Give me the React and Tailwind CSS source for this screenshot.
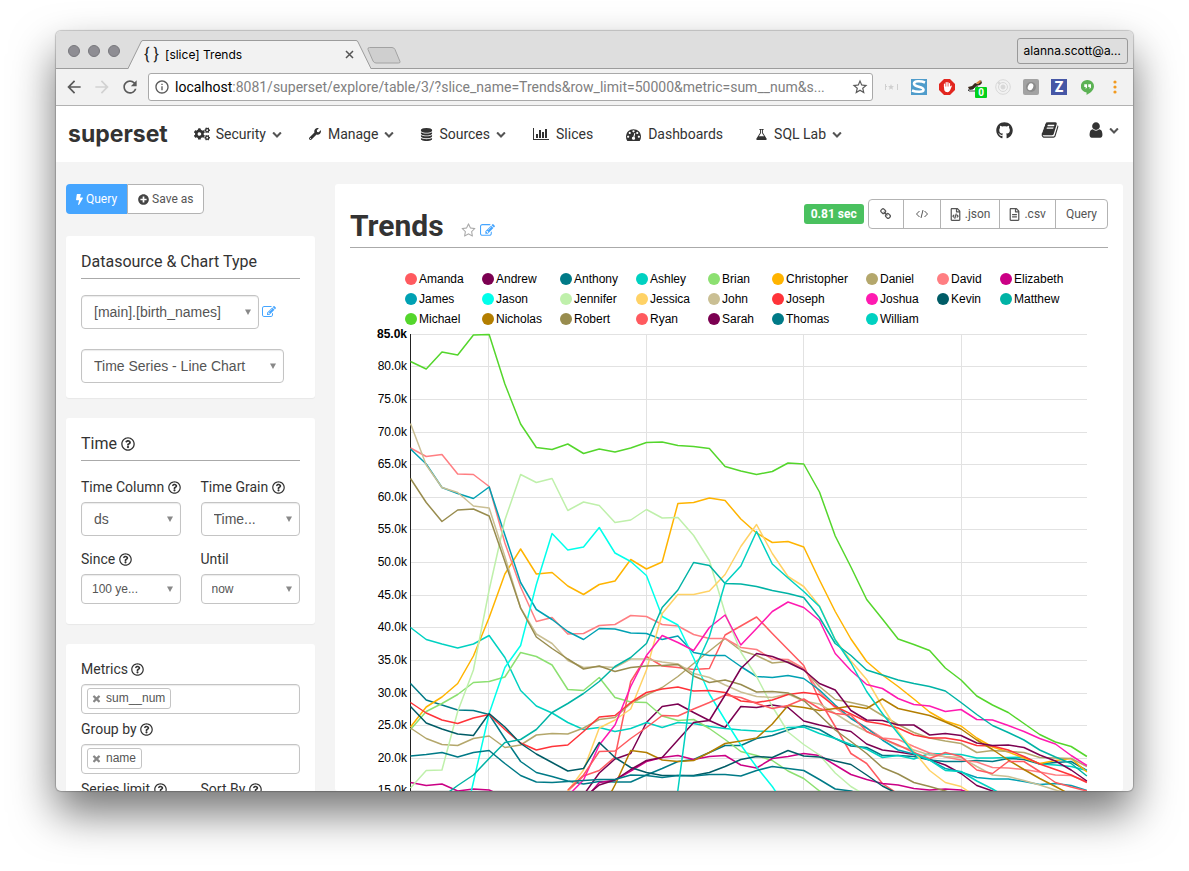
import React, { useState } from "react";
import {
  FaBolt,
  FaCogs,
  FaGithub,
  FaPlusCircle,
  FaRegFileAlt,
  FaRegFileCode,
  FaRegQuestionCircle,
  FaWrench,
} from "react-icons/fa";
import { MdArrowBack, MdArrowForward, MdRefresh, MdStarBorder, MdInfoOutline } from "react-icons/md";

// Older Font Awesome glyphs that the icon package no longer ships
const glyphs = {
  edit: "M888 1184l116-116-152-152-116 116v56h96v96h56zm440-720q-16-16-33 1l-350 350q-17 17-1 33t33-1l350-350q17-17 1-33zm80 594v190q0 119-84.5 203.5t-203.5 84.5h-832q-119 0-203.5-84.5t-84.5-203.5v-832q0-119 84.5-203.5t203.5-84.5h832q63 0 117 25 15 7 18 23 3 17-9 29l-49 49q-14 14-32 8-23-6-45-6h-832q-66 0-113 47t-47 113v832q0 66 47 113t113 47h832q66 0 113-47t47-113v-126q0-13 9-22l64-64q15-15 35-7t20 29zm-96-738l288 288-672 672h-288v-288zm444 132l-92 92-288-288 92-92q28-28 68-28t68 28l152 152q28 28 28 68t-28 68z",
  star: "M1201 1004l306-297-422-62-189-382-189 382-422 62 306 297-73 421 378-199 377 199zm527-357q0 22-26 48l-363 354 86 500q1 7 1 20 0 50-41 50-19 0-40-12l-449-236-449 236q-22 12-40 12-21 0-31.5-14.5t-10.5-35.5q0-6 2-20l86-500-364-354q-25-27-25-48 0-37 56-46l502-73 225-455q19-41 49-41t49 41l225 455 502 73q56 9 56 46z",
  chart: "M640 896v512h-256v-512h256zm384-512v1024h-256v-1024h256zm1024 1152v128h-2048v-1536h128v1408h1920zm-640-896v768h-256v-768h256zm384-384v1152h-256v-1152h256z",
  database: "M896 768q237 0 443-43t325-127v170q0 69-103 128t-280 93.5-385 34.5-385-34.5-280-93.5-103-128v-170q119 84 325 127t443 43zm0 768q237 0 443-43t325-127v170q0 69-103 128t-280 93.5-385 34.5-385-34.5-280-93.5-103-128v-170q119 84 325 127t443 43zm0-384q237 0 443-43t325-127v170q0 69-103 128t-280 93.5-385 34.5-385-34.5-280-93.5-103-128v-170q119 84 325 127t443 43zm0-1152q208 0 385 34.5t280 93.5 103 128v128q0 69-103 128t-280 93.5-385 34.5-385-34.5-280-93.5-103-128v-128q0-69 103-128t280-93.5 385-34.5z",
  chevron: "M1683 808l-742 741q-19 19-45 19t-45-19l-742-741q-19-19-19-45.5t19-45.5l166-165q19-19 45-19t45 19l531 531 531-531q19-19 45-19t45 19l166 165q19 19 19 45.5t-19 45.5z",
  flask: "M1591 1448q56 89 21.5 152.5t-140.5 63.5h-1152q-106 0-140.5-63.5t21.5-152.5l503-793v-399h-64q-26 0-45-19t-19-45 19-45 45-19h512q26 0 45 19t19 45-19 45-45 19h-64v399zm-779-725l-272 429h712l-272-429-20-31v-436h-128v436z",
  dashboard: "M384 1152q0-53-37.5-90.5t-90.5-37.5-90.5 37.5-37.5 90.5 37.5 90.5 90.5 37.5 90.5-37.5 37.5-90.5zm192-448q0-53-37.5-90.5t-90.5-37.5-90.5 37.5-37.5 90.5 37.5 90.5 90.5 37.5 90.5-37.5 37.5-90.5zm428 481l101-382q6-26-7.5-48.5t-38.5-29.5-48 6.5-30 39.5l-101 382q-60 5-107 43.5t-63 98.5q-20 77 20 146t117 89 146-20 89-117q16-60-6-117t-72-91zm660-33q0-53-37.5-90.5t-90.5-37.5-90.5 37.5-37.5 90.5 37.5 90.5 90.5 37.5 90.5-37.5 37.5-90.5zm-640-640q0-53-37.5-90.5t-90.5-37.5-90.5 37.5-37.5 90.5 37.5 90.5 90.5 37.5 90.5-37.5 37.5-90.5zm448 192q0-53-37.5-90.5t-90.5-37.5-90.5 37.5-37.5 90.5 37.5 90.5 90.5 37.5 90.5-37.5 37.5-90.5zm320 448q0 261-141 483-19 29-54 29h-1402q-35 0-54-29-141-221-141-483 0-182 71-348t191-286 286-191 348-71 348 71 286 191 191 286 71 348z",
  user: "M1536 1399q0 109-62.5 187t-150.5 78h-854q-88 0-150.5-78t-62.5-187q0-85 8.5-160.5t31.5-152 58.5-131 94-89 134.5-34.5q131 128 313 128t313-128q76 0 134.5 34.5t94 89 58.5 131 31.5 152 8.5 160.5zm-256-887q0 159-112.5 271.5t-271.5 112.5-271.5-112.5-112.5-271.5 112.5-271.5 271.5-112.5 271.5 112.5 112.5 271.5z",
  book: "M1703 478q40 57 18 129l-275 906q-19 64-76.5 107.5t-122.5 43.5h-923q-77 0-148.5-53.5t-99.5-131.5q-24-67-2-127 0-4 3-27t4-37q1-8-3-21.5t-3-19.5q2-11 8-21t16.5-23.5 16.5-23.5q23-38 45-91.5t30-91.5q3-10 .5-30t-.5-28q3-11 17-28t17-23q21-36 42-92t25-90q1-9-2.5-32t.5-28q4-13 22-30.5t22-22.5q19-26 42.5-84.5t27.5-96.5q1-8-3-25.5t-2-26.5q2-8 9-18t18-23 17-21q8-12 16.5-30.5t15-35 16-36 19.5-32 26.5-23.5 36-11.5 47.5 5.5l-1 3q38-9 51-9h761q74 0 114 56t18 130l-274 906q-36 119-71.5 153.5t-128.5 34.5h-869q-27 0-38 15-11 16-1 43 24 70 144 70h923q29 0 56-15.5t35-41.5l300-987q7-22 5-57 38 15 59 43zm-1064 2q-4 13 2 22.5t20 9.5h608q13 0 25.5-9.5t16.5-22.5l21-64q4-13-2-22.5t-20-9.5h-608q-13 0-25.5 9.5t-16.5 22.5zm-83 256q-4 13 2 22.5t20 9.5h608q13 0 25.5-9.5t16.5-22.5l21-64q4-13-2-22.5t-20-9.5h-608q-13 0-25.5 9.5t-16.5 22.5z",
  times: "M1490 1322q0 40-28 68l-136 136q-28 28-68 28t-68-28l-294-294-294 294q-28 28-68 28t-68-28l-136-136q-28-28-28-68t28-68l294-294-294-294q-28-28-28-68t28-68l136-136q28-28 68-28t68 28l294 294 294-294q28-28 68-28t68 28l136 136q28 28 28 68t-28 68l-294 294 294 294q28 28 28 68z",
  chain: "M1456 1216q0-40-28-68l-208-208q-28-28-68-28-42 0-72 32 3 3 19 18.5t21.5 21.5 15 19 13 25.5 3.5 27.5q0 40-28 68t-68 28q-15 0-27.5-3.5t-25.5-13-19-15-21.5-21.5-18.5-19q-33 31-33 73 0 40 28 68l206 207q27 27 68 27 40 0 68-26l147-146q28-28 28-67zm-703-705q0-40-28-68l-206-207q-28-28-68-28-39 0-68 27l-147 146q-28 28-28 67 0 40 28 68l208 208q27 27 68 27 42 0 72-31-3-3-19-18.5t-21.5-21.5-15-19-13-25.5-3.5-27.5q0-40 28-68t68-28q15 0 27.5 3.5t25.5 13 19 15 21.5 21.5 18.5 19q33-31 33-73zm895 705q0 120-85 203l-147 146q-83 83-203 83-121 0-204-85l-206-207q-83-83-83-203 0-123 88-209l-88-88q-86 88-208 88-120 0-204-84l-208-208q-84-84-84-204t85-203l147-146q83-83 203-83 121 0 204 85l206 207q83 83 83 203 0 123-88 209l88 88q86-88 208-88 120 0 204 84l208 208q84 84 84 204z",
};

const Glyph = ({ name, className = "size-4" }) => (
  <svg
    viewBox={name === "chart" ? "0 0 2048 1792" : "0 0 1792 1792"}
    className={`shrink-0 ${className}`}
    fill="currentColor"
    aria-hidden="true"
  >
    <path d={glyphs[name]} />
  </svg>
);

// name, colour, index of first year, then the line's height at every year
const series = [
  ["Amanda", "#ff5a5f", 10, [791, 776, 770.5, 757, 681.5, 656.5, 666, 667.5, 669.5, 668.5, 635, 626, 617, 633.5, 649.5, 665.5, 700, 726.5, 753.5, 763.5, 783.5, 794]],
  ["Andrew", "#7b0051", 11, [795, 773, 759, 753.5, 722.5, 706.5, 704, 712.5, 720.5, 727.5, 706.5, 707.5, 705, 707.5, 721, 725, 728.5, 731.5, 744, 750, 752, 754.5, 759.5, 765, 773.5, 785.5, 791, 797]],
  ["Anthony", "#007a87", 0, [683.5, 700, 705, 710, 710.5, 714.5, 738.5, 761.5, 772.5, 776.5, 781, 784, 781.5, 782, 782, 775, 768.5, 761.5, 759.5, 752.5, 745.5, 745.5, 738.5, 735.5, 730, 725.5, 729.5, 738.5, 746, 747.5, 755.5, 755.5, 756.5, 760, 761.5, 761.5, 760.5, 761.5, 758.5, 759.5, 764, 762.5, 761.5, 770.5]],
  ["Ashley", "#00d1c1", 0, [627.5, 639.5, 644, 648, 644, 635.5, 657.5, 690.5, 706, 713, 722.5, 729.5, 727.5, 731.5, 728.5, 722.5, 727.5, 722.5, 723.5, 726.5, 728.5, 730, 731, 731.5, 727.5, 727, 733.5, 738.5, 744.5, 749, 757.5, 755.5, 759, 753.5, 754, 754.5, 758, 758, 757.5, 757, 764, 765, 766.5, 770.5]],
  ["Brian", "#8ce071", 0, [729.5, 711.5, 703.5, 694.5, 682.5, 681.5, 677, 652.5, 656.5, 665, 689.5, 690.5, 677.5, 697.5, 702, 702.5, 716, 720.5, 719.5, 728.5, 739.5, 751.5, 755.5, 760.5, 771, 778.5, 791, 800]],
  ["Christopher", "#ffb400", 0, [727, 707, 697, 683.5, 656, 617.5, 574, 549, 574, 572.5, 586, 594.5, 584.5, 581, 559.5, 569, 562, 503.5, 502.5, 498, 500.5, 519, 533, 542.5, 541.5, 547, 580, 611.5, 639, 661.5, 675, 686.5, 699, 712, 721, 726, 738, 747, 752, 758, 763.5, 760.5, 758.5, 772]],
  ["Daniel", "#b4a76c", 0, [728, 738.5, 744.5, 745.5, 738.5, 736, 747.5, 745, 735, 733.5, 734, 728, 719.5, 717.5, 703.5, 695, 687.5, 676.5, 663.5, 651, 638.5, 650.5, 655.5, 663, 661.5, 669.5, 686.5, 699.5, 702.5, 706, 715.5, 724.5, 732.5, 738, 741, 743.5, 752.5, 750.5, 751.5, 752.5, 757.5, 758, 758.5, 766.5]],
  ["David", "#ff7e82", 0, [448, 456.5, 454.5, 474, 474.5, 486.5, 543, 587, 621.5, 617.5, 634, 633.5, 625.5, 624.5, 615.5, 616.5, 624.5, 626, 634.5, 638.5, 638.5, 647.5, 649.5, 659, 659.5, 668.5, 692, 708, 718, 728, 738, 739.5, 746.5, 753, 757, 760, 762, 767.5, 768, 769.5, 772, 775, 775.5, 781.5]],
  ["Elizabeth", "#cb0085", 0, [782.5, 785.5, 784, 791, 789, 790, 797, 800, 802, 803, 803, 801, 782.5, 780, 771, 761.5, 757.5, 755.5, 759.5, 756.5, 755.5, 765, 768, 758.5, 756.5, 753.5, 755.5, 765, 774.5, 779.5, 783.5, 785, 788.5, 790, 789, 790, 795]],
  ["James", "#00a1b3", 0, [449, 464, 487.5, 493.5, 498.5, 487, 535, 582.5, 609.5, 619.5, 631.5, 639.5, 628.5, 629, 633, 633.5, 639.5, 636, 652.5, 655.5, 655.5, 666.5, 676.5, 677.5, 675.5, 678.5, 690, 705, 718.5, 728, 740, 750, 754, 760, 768.5, 772, 777.5, 779, 779, 781.5, 784.5, 783.5, 785.5, 790.5]],
  ["Jason", "#00ffeb", 3, [850, 782, 713.5, 667.5, 645.5, 584.5, 533.5, 550, 547, 527.5, 553, 561.5, 575.5, 616.5, 625, 658, 694, 720, 745, 767, 786.5, 810]],
  ["Jennifer", "#bff0ab", 0, [788, 770.5, 770, 711.5, 670, 590, 520, 474.5, 482.5, 478.5, 510.5, 502, 505.5, 522.5, 520, 509.5, 518, 517.5, 535.5, 560.5, 613, 652, 676.5, 706.5, 732, 744.5, 755, 773, 786.5, 796]],
  ["Jessica", "#ffd266", 10, [791, 770, 728, 720, 709, 670, 613.5, 594.5, 594.5, 591, 574.5, 546.5, 524.5, 553.5, 576.5, 586.5, 606, 639.5, 661, 679.5, 706.5, 731.5, 751.5, 770.5, 782.5, 786.5, 797]],
  ["John", "#cabf94", 0, [423.5, 465, 487.5, 492.5, 506, 508, 556.5, 608, 634, 643.5, 660.5, 667.5, 666.5, 667.5, 659, 659, 662, 664, 673.5, 677.5, 685, 692, 696.5, 697.5, 694, 701, 704, 713.5, 723.5, 731.5, 738.5, 746, 750, 755, 756.5, 757.5, 766.5, 775, 776.5, 780.5, 785, 790, 795]],
  ["Joseph", "#ff3339", 0, [702.5, 713, 720, 723.5, 718, 714.5, 729.5, 743, 750, 746.5, 745, 731.5, 717, 715.5, 702.5, 692.5, 689, 687, 691, 690.5, 692.5, 701, 702.5, 700, 694.5, 692.5, 694.5, 706.5, 714, 721.5, 724, 728, 735, 738, 738, 740.5, 745.5, 746, 750, 756.5, 764, 769.5, 775, 782.5]],
  ["Joshua", "#ff1ab1", 10, [796, 780, 745, 725, 686.5, 655.5, 635.5, 642.5, 650.5, 627.5, 615, 645, 628.5, 611.5, 602, 607.5, 620.5, 653.5, 670.5, 684.5, 688.5, 698.5, 704.5, 706, 711.5, 709.5, 719.5, 720, 725.5, 731.5, 738.5, 744, 755.5, 765.5]],
  ["Kevin", "#005c66", 0, [706.5, 723, 729, 734, 735.5, 713.5, 727, 743.5, 754, 762.5, 771, 768.5, 742.5, 757.5, 767.5, 772.5, 775.5, 775.5, 775.5, 772.5, 766.5, 759.5, 756.5, 757.5, 750.5, 756, 757, 761, 764.5, 775, 786, 794]],
  ["Matthew", "#00b3a5", 2, [797, 785.5, 775, 758.5, 742.5, 739.5, 729.5, 712.5, 703.5, 693.5, 681.5, 666.5, 657.5, 643.5, 607.5, 590, 562.5, 565.5, 583.5, 584, 586.5, 590.5, 593.5, 597.5, 617.5, 643.5, 655.5, 670, 675, 680, 683.5, 686.5, 691, 702.5, 714.5, 725.5, 732.5, 740, 750, 757, 763.5, 776]],
  ["Michael", "#54d62c", 0, [361.5, 369, 352, 355, 335, 334.5, 384, 424, 447.5, 449.5, 444, 453.5, 449, 452, 448, 442.5, 442, 445.5, 446.5, 448.5, 466.5, 471, 474.5, 471.5, 463, 464, 492, 536, 567, 599.5, 619, 639, 644.5, 650.5, 668, 680, 696, 705, 712.5, 723.5, 734.5, 742, 746.5, 756.5]],
  ["Nicholas", "#b37e00", 12, [815, 785, 750.5, 752.5, 760, 761.5, 760.5, 752.5, 743.5, 741, 738, 724, 705.5, 707.5, 710.5, 708.5, 706, 708.5, 699, 708.5, 712, 715.5, 722, 729, 740, 749.5, 760, 769.5, 778.5, 786.5, 795]],
  ["Robert", "#988c4e", 0, [478.5, 502.5, 521.5, 510, 509, 516, 561.5, 608, 637, 648.5, 659, 669, 666, 671.5, 667.5, 666, 665.5, 664.5, 676, 682.5, 680, 684.5, 692, 691.5, 693, 700.5, 715, 730, 741.5, 753.5, 767.5, 774, 782.5, 786.5, 791, 797]],
  ["Ryan", "#ff5a5f", 10, [790, 775, 751.5, 751, 738.5, 727.5, 715.5, 716, 709, 702.5, 695, 697.5, 703.5, 708.5, 705.5, 699, 708.5, 713.5, 715, 731.5, 738.5, 745, 752.5, 758.5, 752.5, 756.5, 770, 773.5, 761.5, 761.5, 771.5, 782.5, 787, 791]],
  ["Sarah", "#7b0051", 11, [798, 785, 780, 769.5, 760.5, 757.5, 740, 722.5, 720.5, 695, 668.5, 653.5, 656.5, 662.5, 670, 683.5, 690, 710.5, 720, 720.5, 725, 725, 735, 733.5, 735.5, 743, 745.5, 745, 747.5, 755, 761, 770, 781]],
  ["Thomas", "#007a87", 0, [756, 754.5, 752.5, 757, 752.5, 750.5, 763.5, 775.5, 782, 782.5, 781.5, 780.5, 779.5, 779.5, 775, 775.5, 777.5, 775.5, 776, 774.5, 774.5, 776, 770.5, 766.5, 768.5, 770.5, 779.5, 789, 791, 796]],
  ["William", "#00d1c1", 16, [900, 790, 671.5, 636.5, 583, 566, 531.5, 564, 578, 591.5, 606.5, 640, 663, 691.5, 713.5, 733.5, 753.5, 760, 770.5, 771.5, 781, 789, 798]],
];

const yearX = (i) => 410.5 + i * 15.73;
const gridX = (i) => Math.floor(410 + i * 15.75) + 0.5;
const ticks = [80, 75, 70, 65, 60, 55, 50, 45, 40, 35, 30, 25, 20, 15, 10];
const tickY = (v) => Math.floor(366.8 + (80 - v) * 6.526);

const LineChart = () => (
  <svg
    viewBox="350 329 758 520"
    className="block h-auto w-full overflow-visible"
    role="img"
    aria-label="Trends line chart"
  >
    <g stroke="#e2e2e2" strokeWidth="1">
      <path d="M410 334.5H1087" />
      {ticks.map((t) => (
        <path key={t} d={`M410 ${tickY(t) + 0.5}H1087`} />
      ))}
      {[5, 15, 25, 35].map((i) => (
        <path key={i} d={`M${gridX(i)} 334V849`} />
      ))}
    </g>
    <path d="M410.5 334V849" stroke="#222" strokeWidth="1" />
    <g fill="none" strokeWidth="1.5" strokeLinejoin="round">
      {series.map(([name, color, start, ys]) => (
        <polyline
          key={name}
          stroke={color}
          points={ys.map((y, k) => `${yearX(start + k)},${y}`).join(" ")}
        />
      ))}
    </g>
    <g fontSize="12" textAnchor="end" fill="#000" fontFamily="'Liberation Sans', Arial, sans-serif">
      <text x="407" y="338" fontWeight="bold">
        85.0k
      </text>
      {ticks.map((t) => (
        <text key={t} x="407" y={tickY(t) + 4}>
          {t}.0k
        </text>
      ))}
    </g>
  </svg>
);

const Legend = () => (
  <ul className="ml-[55px] mt-[21px] grid grid-cols-[77px_78px_76px_72px_64px_94px_71px_63px_auto] font-['Liberation_Sans',Arial,sans-serif] text-xs leading-5 text-black">
    {series.map(([name, color]) => (
      <li key={name} className="flex items-center gap-[2px] whitespace-nowrap">
        <span className="size-3 shrink-0 rounded-full" style={{ backgroundColor: color }} />
        {name}
      </li>
    ))}
  </ul>
);

const Help = () => <FaRegQuestionCircle className="inline size-[13px] align-[-2px]" />;

const Select = ({ id, label, value, small, className = "" }) => (
  <div className={`relative ${className}`}>
    <select
      id={id}
      aria-label={label}
      className={`block w-full appearance-none rounded border border-[#c4c4c4] bg-white pr-6 font-['Liberation_Sans',Arial,sans-serif] text-[#555] shadow-[inset_0_1px_1px_rgba(0,0,0,0.08)] ${
        small ? "h-[30px] pl-[10px] text-xs" : "h-[34px] pl-3 text-sm"
      }`}
    >
      <option>{value}</option>
    </select>
    <svg viewBox="0 0 6 6" className="pointer-events-none absolute right-2 top-1/2 size-[6px] -translate-y-1/2">
      <path d="M0 .5h6L3 6z" fill="#888" />
    </svg>
  </div>
);

const Field = ({ id, label, value, small, help = true }) => (
  <div>
    <label htmlFor={id} className="mb-[5px] block whitespace-nowrap text-sm leading-5">
      {label} {help && <Help />}
    </label>
    <Select id={id} value={value} small={small} />
  </div>
);

const TagField = ({ id, label, initial }) => {
  const [tags, setTags] = useState([initial]);
  return (
    <div>
      <label htmlFor={id} className="mb-[5px] block text-sm leading-5">
        {label} <Help />
      </label>
      <div className="flex h-[30px] items-start rounded border border-[#c4c4c4] bg-white px-[5px] pt-[3px] shadow-[inset_0_1px_1px_rgba(0,0,0,0.08)]">
        {tags.map((tag) => (
          <span
            key={tag}
            className="flex h-[21px] items-center gap-1 rounded-[3px] border border-[#c4c4c4] pb-px pl-[3px] pr-[5px] font-['Liberation_Sans',Arial,sans-serif] text-xs text-[#555]"
          >
            <button type="button" aria-label={`Remove ${tag}`} onClick={() => setTags([])}>
              <Glyph name="times" className="size-[11px] text-[#888]" />
            </button>
            {tag}
          </span>
        ))}
        <input id={id} className="min-w-0 flex-1 bg-transparent text-xs outline-none" />
      </div>
    </div>
  );
};

const Card = ({ title, children, className = "" }) => (
  <section className={`rounded-[3px] bg-white px-[15px] pt-[15px] shadow-[0_1px_1px_rgba(0,0,0,0.05)] ${className}`}>
    {title && (
      <h2 className="mb-4 border-b border-[#aaa] pb-[6px] pt-px text-base leading-5">{title}</h2>
    )}
    {children}
  </section>
);

const NavItem = ({ icon, label, caret }) => (
  <a href="#" className={`flex items-center gap-[6px] whitespace-nowrap ${caret ? "" : "pr-[6px]"}`}>
    {icon}
    <span>{label}</span>
    {caret && <Glyph name="chevron" className="size-[10px] text-[#555]" />}
  </a>
);

const ToolIcon = ({ children }) => (
  <span className="flex w-7 shrink-0 items-center justify-center">{children}</span>
);

const TabStrip = () => (
  <div className="flex h-[38px] items-end border-b border-[#9c9c9c] bg-[#dedede] pl-3 pt-[2px]">
    <div className="flex gap-2 self-center">
      <span className="size-3 rounded-full border border-[#77777c] bg-[#8e8d93]" />
      <span className="size-3 rounded-full border border-[#77777c] bg-[#8e8d93]" />
      <span className="size-3 rounded-full border border-[#77777c] bg-[#8e8d93]" />
    </div>
    <div className="relative -mb-px ml-2 flex h-[29px] w-[243px] items-center pl-4 pr-[17px] font-['Inter',sans-serif] text-xs text-black">
      <svg viewBox="0 0 243 29" className="absolute inset-0 size-full">
        <path d="M0 29L13 2Q13.500 .5 15 .5H228Q229.500 .5 230 2L243 29z" fill="#f2f2f2" />
        <path
          d="M0 28.500L13 2Q13.500 .5 15 .5H228Q229.500 .5 230 2L243 28.500"
          fill="none"
          stroke="#9c9c9c"
        />
      </svg>
      <span className="relative w-4 whitespace-nowrap font-['Roboto',sans-serif] text-base leading-5 text-[#222]">
        {"{ }"}
      </span>
      <span className="relative ml-[5px] flex-1">[slice] Trends</span>
      <button type="button" aria-label="Close tab" className="relative">
        <svg viewBox="0 0 9 9" className="size-[9px]" stroke="#555" strokeWidth="1.5">
          <path d="M1 1l7 7M8 1L1 8" />
        </svg>
      </button>
    </div>
    <svg viewBox="0 0 34 17" className="-ml-1 mb-1 h-[17px] w-[34px]">
      <path d="M2.500 .5H25q2 0 3 2l5 12q.5 1.500-1.500 1.500H9q-2 0-3-2L1 2.500q-.5-2 1.500-2z" fill="#cfcfcf" stroke="#a2a2a2" />
    </svg>
    <button
      type="button"
      className="ml-auto mr-[5px] h-[26px] self-center rounded-[3px] border border-[#999] px-[6px] font-['Inter',sans-serif] text-xs text-black"
    >
      alanna.scott@a…
    </button>
  </div>
);

const Toolbar = () => (
  <div className="flex h-[37px] items-center border-b border-[#b2b2b2] bg-[#f2f2f2] px-1">
    <button type="button" aria-label="Back" className="flex w-7 justify-center text-[#5a5a5a]">
      <MdArrowBack className="size-5" />
    </button>
    <button type="button" aria-label="Forward" className="flex w-7 justify-center text-[#d2d2d2]">
      <MdArrowForward className="size-5" />
    </button>
    <button type="button" aria-label="Reload" className="flex w-7 justify-center text-[#5a5a5a]">
      <MdRefresh className="size-5" />
    </button>
    <div className="ml-1 mr-1 flex h-7 min-w-0 flex-1 items-center rounded-[3px] border border-[#a9a9a9] bg-white pl-[5px] pr-[3px] font-['Roboto',sans-serif] text-sm text-[#808080]">
      <MdInfoOutline className="mr-[5px] size-4 shrink-0 text-[#5a5a5a]" />
      <span className="flex-1 truncate">
        <span className="text-black">localhost</span>
        :8081/superset/explore/table/3/?slice_name=Trends&amp;row_limit=50000&amp;metric=sum__num&amp;s...
      </span>
      <MdStarBorder className="size-[18px] shrink-0 text-[#5a5a5a]" />
    </div>
    <ToolIcon>
      <svg viewBox="0 0 14 6" className="h-[6px] w-[14px]" fill="#cfcfcf">
        <path d="M1 0h1v2h1v1H2v3H1zM13 0h1v6h-1zM7 0l.8 2 2.200.2-1.600 1.300.5 2.200L7 4.500 5.100 5.700l.5-2.200L4 2.200 6.200 2z" />
      </svg>
    </ToolIcon>
    <ToolIcon>
      <svg viewBox="0 0 16 16" className="size-4">
        <rect width="16" height="16" fill="#4f9ccb" />
        <path d="M14 3.500C10 1.800 3 1.600 3 4.700c0 3.500 9.500 2.600 9.500 6 0 2.700-7 2.600-11.500.8" fill="none" stroke="#fff" strokeWidth="2.600" />
      </svg>
    </ToolIcon>
    <ToolIcon>
      <svg viewBox="0 0 16 16" className="size-4">
        <path d="M5 0h6l5 5v6l-5 5H5l-5-5V5z" fill="#e2261f" />
        <path
          d="M5.500 8V5M7.200 7.500V3.500M8.900 7.500V3.500M10.500 8V4.500"
          stroke="#fff"
          strokeWidth="1.200"
          strokeLinecap="round"
        />
        <path d="M4.900 7.500h6.200l1.200-1q.8.200.4 1L11 11.500q-1 1.800-2.500 1.800-2.500 0-3.200-2z" fill="#fff" />
      </svg>
    </ToolIcon>
    <ToolIcon>
      <span className="relative">
        <svg viewBox="0 0 16 16" className="size-4">
          <path d="M1 8l4-1 3-3 3 1 3-4 1 3-2 2-4 1-3 3H2z" fill="#3c2a1c" />
          <path d="M1 11l5-1 3-3 2 1-3 4H2z" fill="#fff" stroke="#222" strokeWidth=".8" />
          <path d="M9 4l4-3 1 2-3 2z" fill="#d9803a" />
        </svg>
        <span className="absolute left-2 top-2 flex h-[11px] w-3 items-center justify-center rounded-[1px] bg-[#00d11b] font-['Roboto',sans-serif] text-[10px] font-bold leading-none text-white">
          0
        </span>
      </span>
    </ToolIcon>
    <ToolIcon>
      <svg viewBox="0 0 16 16" className="size-4" fill="none" stroke="#d8d8d8">
        <circle cx="8" cy="8" r="7.300" />
        <circle cx="8" cy="8" r="4.500" />
        <circle cx="8" cy="8" r="2" fill="#d8d8d8" />
        <circle cx="4" cy="4" r="1" fill="#d8d8d8" />
      </svg>
    </ToolIcon>
    <ToolIcon>
      <svg viewBox="0 0 16 16" className="size-4">
        <rect width="16" height="16" rx="2" fill="#a3a3a3" />
        <circle cx="8" cy="8" r="5" fill="#8b8b8b" />
        <ellipse cx="7.500" cy="8" rx="2.600" ry="3.600" transform="rotate(25 8 8)" fill="#fff" />
      </svg>
    </ToolIcon>
    <ToolIcon>
      <span className="flex size-4 items-center justify-center bg-[#4657a6] font-['Roboto',sans-serif] text-sm font-black leading-none text-white">
        Z
      </span>
    </ToolIcon>
    <ToolIcon>
      <svg viewBox="0 0 14 16" className="h-[15px] w-[13px]">
        <path d="M7 0a6.700 6.700 0 00-1 13.400V16c3-1.500 8-4.500 8-9.300A6.800 6.800 0 007 0z" fill="#5cb254" />
        <path d="M3.500 4.500h3V8L5 9.500V7.500H3.500zM7.800 4.500h3V8L9.300 9.500V7.500H7.800z" fill="#fff" />
      </svg>
    </ToolIcon>
    <ToolIcon>
      <svg viewBox="0 0 4 14" className="h-[14px] w-1" fill="#f29a1f">
        <circle cx="2" cy="2" r="1.600" />
        <circle cx="2" cy="7" r="1.600" />
        <circle cx="2" cy="12" r="1.600" />
      </svg>
    </ToolIcon>
  </div>
);

const NavBar = () => (
  <nav className="flex h-14 items-center bg-white pl-3 pr-[14px] text-sm">
    <a href="#" className="mr-[26px] font-['Inter',sans-serif] text-[23px] font-bold leading-7">
      superset
    </a>
    <div className="flex items-center gap-[26px]">
      <NavItem icon={<FaCogs className="size-4" />} label="Security" caret />
      <NavItem icon={<FaWrench className="size-[14px] p-px" />} label="Manage" caret />
      <NavItem icon={<Glyph name="database" className="size-[13px]" />} label="Sources" caret />
      <NavItem icon={<Glyph name="chart" className="h-[14px] w-[18px]" />} label="Slices" />
      <NavItem icon={<Glyph name="dashboard" className="h-[15px] w-[17px]" />} label="Dashboards" />
      <NavItem icon={<Glyph name="flask" className="size-[13px]" />} label="SQL Lab" caret />
    </div>
    <div className="mb-2 ml-auto flex items-center gap-7">
      <a href="#" aria-label="GitHub">
        <FaGithub className="size-[17px]" />
      </a>
      <a href="#" aria-label="Documentation">
        <Glyph name="book" className="size-[18px]" />
      </a>
      <a href="#" aria-label="Account" className="flex items-center gap-1">
        <Glyph name="user" className="size-[18px]" />
        <Glyph name="chevron" className="size-[10px] text-[#555]" />
      </a>
    </div>
  </nav>
);

const Sidebar = () => (
  <aside className="w-[249px] shrink-0">
    <div className="mb-[22px] flex h-[30px] text-xs">
      <button type="button" className="flex items-center gap-[3px] rounded-l-sm bg-[#45a5ff] px-[10px] text-white">
        <FaBolt className="h-[11px] w-[7px]" />
        Query
      </button>
      <button
        type="button"
        className="flex items-center gap-[3px] rounded-r-sm border border-[#b3b3b3] bg-white px-[10px] text-[#555]"
      >
        <FaPlusCircle className="size-[11px] text-[#444]" />
        Save as
      </button>
    </div>

    <div className="flex flex-col gap-5">
      <Card title="Datasource & Chart Type" className="pb-[15px]">
        <div className="mb-5 flex items-center gap-[3px]">
          <Select label="Datasource" value="[main].[birth_names]" className="w-[178px]" />
          <a href="#" aria-label="Edit datasource" className="text-[#45a5ff]">
            <Glyph name="edit" className="size-[14px]" />
          </a>
        </div>
        <Select label="Chart type" value="Time Series - Line Chart" className="w-[203px]" />
      </Card>

      <Card
        title={
          <>
            Time <FaRegQuestionCircle className="inline size-[14px] align-[-2px]" />
          </>
        }
        className="pb-5"
      >
        <div className="grid grid-cols-2 gap-x-5 gap-y-[13px]">
          <Field id="time-column" label="Time Column" value="ds" />
          <Field id="time-grain" label="Time Grain" value="Time..." />
          <Field id="since" label="Since" value="100 ye..." small />
          <Field id="until" label="Until" value="now" small help={false} />
        </div>
      </Card>

      <Card className="flex flex-col gap-[5px] pb-5">
        <TagField id="metrics" label="Metrics" initial="sum__num" />
        <TagField id="group-by" label="Group by" initial="name" />
        <div className="grid grid-cols-2 gap-x-5">
          <Field id="series-limit" label="Series limit" value="" small />
          <Field id="sort-by" label="Sort By" value="" small />
        </div>
      </Card>
    </div>
  </aside>
);

const ChartPanel = () => (
  <main className="min-w-0 flex-1 rounded-[3px] bg-white px-[15px] pt-[15px]">
    <header className="flex h-[49px] items-start border-b border-[#aaa]">
      <h1 className="mt-[9px] text-[30px] font-bold leading-9">Trends</h1>
      <div className="ml-[17px] mt-6 flex gap-1">
        <button type="button" aria-label="Favorite" className="text-[#aaa]">
          <Glyph name="star" className="size-[15px]" />
        </button>
        <a href="#" aria-label="Edit slice" className="text-[#45a5ff]">
          <Glyph name="edit" className="size-[15px]" />
        </a>
      </div>
      <div className="ml-auto flex items-center gap-1 text-xs">
        <span className="rounded-[3px] bg-[#4ac15f] px-[7px] font-bold leading-5 text-white">0.81 sec</span>
        <div className="flex h-[30px] divide-x divide-[#b3b3b3] rounded-sm border border-[#b3b3b3] text-[#555]">
          <button type="button" aria-label="Permalink" className="px-[11px]">
            <Glyph name="chain" className="size-3" />
          </button>
          <button type="button" aria-label="Embed code" className="px-[11px]">
            <svg viewBox="0 0 14 10" className="h-[10px] w-[14px]" fill="none" stroke="currentColor">
              <path d="M4.500 2L1.500 5l3 3M9.500 2l3 3-3 3M8 1L6 9" />
            </svg>
          </button>
          <a href="#" className="flex items-center gap-1 px-[9px]">
            <FaRegFileCode className="h-[13px] w-[11px]" />
            .json
          </a>
          <a href="#" className="flex items-center gap-1 px-[9px]">
            <FaRegFileAlt className="h-[13px] w-[11px]" />
            .csv
          </a>
          <button type="button" className="px-[10px]">
            Query
          </button>
        </div>
      </div>
    </header>
    <Legend />
    <LineChart />
  </main>
);

const App = () => (
  <div className="flex h-screen flex-col bg-white px-14 pb-20 pt-[31px]">
    <div className="flex min-h-0 flex-1 flex-col overflow-hidden rounded-[5px] bg-[#f4f4f4] font-['Roboto',sans-serif] text-[#333] shadow-[0_22px_44px_rgba(0,0,0,0.55),0_0_1px_1px_rgba(0,0,0,0.2)]">
      <TabStrip />
      <Toolbar />
      <NavBar />
      <div className="flex min-h-0 flex-1 gap-5 overflow-hidden px-[10px] pt-[22px]">
        <Sidebar />
        <ChartPanel />
      </div>
    </div>
  </div>
);

export default App;
